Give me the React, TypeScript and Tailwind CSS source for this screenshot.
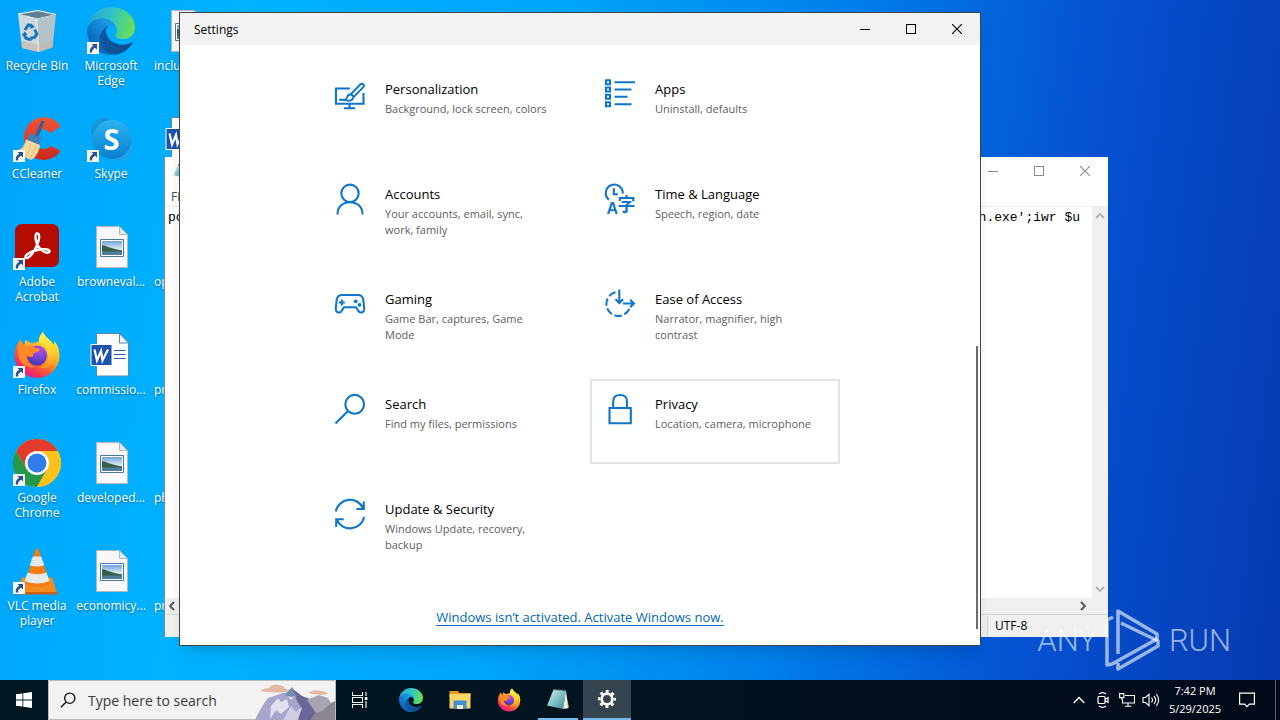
import type { ReactNode } from "react";

type IconProps = { className?: string };

/* ---------- Brand and file drawings ---------- */

function EdgeLogo({ className }: IconProps) {
  return (
    <svg viewBox="0 0 256 256" className={className} aria-hidden="true">
      <defs>
        <linearGradient id="edgeA" x1="63" y1="178" x2="241" y2="178" gradientUnits="userSpaceOnUse">
          <stop offset="0" stopColor="#0c59a4" />
          <stop offset="1" stopColor="#114a8b" />
        </linearGradient>
        <linearGradient id="edgeB" x1="153" y1="100" x2="46" y2="222" gradientUnits="userSpaceOnUse">
          <stop offset="0" stopColor="#1b9de2" />
          <stop offset=".4" stopColor="#1287d8" />
          <stop offset="1" stopColor="#0a62b8" />
        </linearGradient>
        <linearGradient id="edgeC" x1="10" y1="60" x2="245" y2="130" gradientUnits="userSpaceOnUse">
          <stop offset="0" stopColor="#2aa6d4" />
          <stop offset=".45" stopColor="#2fc3c8" />
          <stop offset="1" stopColor="#6be04f" />
        </linearGradient>
      </defs>
      <path fill="url(#edgeA)" d="M235.68 190.46a93.73 93.73 0 01-10.54 4.71 101.87 101.87 0 01-35.9 6.46c-47.32 0-88.54-32.55-88.54-74.32A31.48 31.48 0 01117.13 100c-42.8 1.8-53.8 46.4-53.8 72.53 0 73.88 68.09 81.37 82.76 81.37 7.91 0 19.84-2.3 27-4.56l1.31-.44a128.34 128.34 0 0066.6-52.8 4 4 0 00-5.32-5.64z" />
      <path fill="url(#edgeB)" d="M105.73 241.42a79.2 79.2 0 01-22.74-21.34 80.72 80.72 0 0129.53-120c3.12-1.47 8.45-4.13 15.54-4a32.35 32.35 0 0125.69 13 31.88 31.88 0 016.36 18.66c0-.21 24.46-79.6-80-79.6-43.9 0-80 41.66-80 78.21a130.15 130.15 0 0012.11 56 128 128 0 00156.38 67.11 75.55 75.55 0 01-62.78-8z" />
      <path fill="url(#edgeC)" d="M152.33 148.86c-.81 1.05-3.3 2.5-3.3 5.66 0 2.61 1.7 5.12 4.72 7.23 14.38 10 41.49 8.68 41.56 8.68a59.56 59.56 0 0030.27-8.35 61.38 61.38 0 0030.43-52.88c.26-22.41-8-37.31-11.34-43.91C223.46 23.93 177.72 0 128 0A128 128 0 000 126.2c.48-36.54 36.8-66.05 80-66.05 3.5 0 23.46.34 42 10.07 16.34 8.58 24.9 18.94 30.85 29.21 6.18 10.67 7.28 24.15 7.28 29.52s-2.74 13.33-7.8 19.91z" />
    </svg>
  );
}

function FirefoxLogo({ className }: IconProps) {
  return (
    <svg viewBox="0 0 48 48" className={className} aria-hidden="true">
      <defs>
        <linearGradient id="ffBody" x1="38" y1="6" x2="12" y2="44" gradientUnits="userSpaceOnUse">
          <stop offset="0" stopColor="#ffe93c" />
          <stop offset=".35" stopColor="#ffb526" />
          <stop offset=".6" stopColor="#ff6a30" />
          <stop offset=".85" stopColor="#f5305c" />
          <stop offset="1" stopColor="#e0208a" />
        </linearGradient>
        <radialGradient id="ffGlobe" cx="26" cy="18" r="15" gradientUnits="userSpaceOnUse">
          <stop offset="0" stopColor="#b34bf0" />
          <stop offset=".6" stopColor="#7a45d8" />
          <stop offset="1" stopColor="#4a3ab4" />
        </radialGradient>
        <linearGradient id="ffTail" x1="30" y1="2" x2="40" y2="36" gradientUnits="userSpaceOnUse">
          <stop offset="0" stopColor="#fff44a" />
          <stop offset=".6" stopColor="#ffd029" />
          <stop offset="1" stopColor="#ff8a22" />
        </linearGradient>
      </defs>
      <path fill="url(#ffBody)" d="M30 1c-3 3-4.500 6.500-4.300 9.500-2 .1-4 .7-6 1.700-3-.2-5.400-1.500-6.700-3.700-1 1.500-1.400 3.500-1.200 5.500C9.500 13 8 10.500 7.600 8.500 4 13 1.500 18.500 1.500 25A22.500 22.500 0 0024 47a22.500 22.500 0 0022.500-22.500c0-5.500-2-11-5.500-14.500.5 2 .6 3.700.3 5C39 9 32.500 7.500 30 1z" />
      <path fill="url(#ffTail)" d="M30 1c-3 3-4.500 7-3.800 10.500 5 1.500 8.800 5.500 9.300 11.500.5 7-4 12.500-10.500 13.500 10 3 19.500-4 20.500-13 .5-5-1.500-10.500-4.500-13.500.5 2 .6 3.700.3 5C39 9 32.500 7.500 30 1z" />
      <circle cx="24" cy="24.500" r="10" fill="url(#ffGlobe)" />
      <path fill="#ff8a26" d="M7.600 9.500C9 13 12 14.500 15.500 14.800c2.500-1 5.500.1 7 2.200 1.500.6 3.500.4 4.500 1.200-.6 2-3 3-5 3.600-1.500.5-2.500 2-2 3.700-3 1.500-5.500 0-6.500-2-.5 6 3.500 11.500 9.500 12.500-9 2-16.500-4-17.500-11-.6-5.500.1-11 2.100-15.500z" />
      <path fill="#ffc230" opacity=".6" d="M13 8.500c1.300 2.200 3.700 3.500 6.700 3.700-3 1.500-5 2.600-7.900 1.800-.2-2 .2-4 1.200-5.500z" />
    </svg>
  );
}

function RecycleBin({ className }: IconProps) {
  return (
    <svg viewBox="0 0 48 48" className={className} aria-hidden="true">
      <path d="M5 7 25 3.500 43 7.500 24 12z" fill="#7f99a8" stroke="#eef5f8" strokeWidth="1" />
      <path d="M8 7.300 25 5l14 2.800L25 11z" fill="#5f7f92" />
      <path d="M5 7 24 12l1.500 33L9 41z" fill="#cdd9df" />
      <path d="M43 7.500 24 12l1.500 33L39.500 40.500z" fill="#b3c1c9" />
      <path d="M9 41 25.500 45 39.500 40.500l.9-7L25 37.500 8.300 34z" fill="#c5b9ac" opacity=".7" />
      <path d="M24 12l1.500 33" stroke="#eef4f7" strokeWidth="1" />
      <g fill="none" stroke="#1a72bd" strokeWidth="3">
        <path d="M12 23l3.200-5 3.500.8" />
        <path d="M21.800 22.500l2 4.500-2.800 4.500" />
        <path d="M17.500 32.500l-4.300-1-2.200-4" />
      </g>
      <path d="M17.800 16l4.200 4-5 2zM22.500 29l-4.500 5.500-.8-5zM8.500 28l3.500-3.500 2.500 3.500z" fill="#1a72bd" />
    </svg>
  );
}

function CCleaner({ className }: IconProps) {
  return (
    <svg viewBox="0 0 48 48" className={className} aria-hidden="true">
      <defs>
        <linearGradient id="ccRed" x1="0" y1="0" x2="0" y2="1">
          <stop offset="0" stopColor="#f0553a" />
          <stop offset="1" stopColor="#c8281c" />
        </linearGradient>
      </defs>
      <path fill="url(#ccRed)" d="M47.500 11.500 37.500 18C31 11.500 22 14.500 21.500 23.500c0 10 9.500 13.500 16 7.500l10 4.500C40 48 22 48 14.500 36 5 19 16 .5 33 2.300c6.500.7 11.500 4 14.500 9.200z" />
      <path d="M28.500 5.500l3 1-7.500 19-3.500-1.500z" fill="#35618c" />
      <path d="M17 18.500l12 4-3 9-13-4.500z" fill="#3f80b4" />
      <path d="M13 24.500l14 5.500c-1 7-4 12-9 15L1 37.500c6-2 10-6 12-13z" fill="#f7d9a0" />
      <path d="M13 27l-6 12M18 28.500l-5 14M23 31l-6 13" stroke="#d8ae6c" strokeWidth=".8" fill="none" />
    </svg>
  );
}

function Skype({ className }: IconProps) {
  return (
    <svg viewBox="0 0 48 48" className={className} aria-hidden="true">
      <defs>
        <linearGradient id="skA" x1="0" y1="0" x2="0" y2="1">
          <stop offset="0" stopColor="#2bb3f2" />
          <stop offset="1" stopColor="#0a7fd0" />
        </linearGradient>
      </defs>
      <circle cx="16.500" cy="15.500" r="12.500" fill="#1794da" />
      <circle cx="32" cy="33" r="13" fill="#1fa3ea" />
      <circle cx="25" cy="24.500" r="19.500" fill="url(#skA)" />
      <text x="24.500" y="34.500" textAnchor="middle" fontSize="29" fontWeight="700" fill="#fff" fontFamily="Open Sans, sans-serif">S</text>
    </svg>
  );
}

function Acrobat({ className }: IconProps) {
  return (
    <svg viewBox="0 0 48 48" className={className} aria-hidden="true">
      <rect x="2" y="1" width="44" height="43" rx="7" fill="#b30b00" />
      <path d="M23.800 10.500c2.800-.9 3 4 1.200 9-2 6-6.500 14-10.500 15.500-2.500.8-3-2 0-4 4.500-3 12-5 18-4.800 4 .2 5.500 2.800 2.500 3.400-4.500.8-11.500-6-12.300-13-.4-3.200-.2-5.700 1.100-6.100z" fill="none" stroke="#fff" strokeWidth="2.400" />
    </svg>
  );
}

function Chrome({ className }: IconProps) {
  return (
    <svg viewBox="0 0 48 48" className={className} aria-hidden="true">
      <circle cx="24" cy="24" r="24" fill="#fcc31e" />
      <path fill="#e33b2e" d="M3.200 12A24 24 0 0144.800 12L24 12 24 24 13.600 30z" />
      <path fill="#24994a" d="M3.200 12A24 24 0 0024 48L34.400 30 24 24 13.600 30z" />
      <path fill="#fcc31e" d="M44.800 12A24 24 0 0124 48L34.400 30 24 24 24 12z" />
      <circle cx="24" cy="24" r="12" fill="#fff" />
      <circle cx="24" cy="24" r="9.500" fill="#2f7de9" />
    </svg>
  );
}

function Vlc({ className }: IconProps) {
  return (
    <svg viewBox="0 0 48 48" className={className} aria-hidden="true">
      <path d="M9 30.500h30L44 45.500 3 46z" fill="#f58a1c" />
      <path d="M3 45h41.200l.3 2.500H3z" fill="#cf5f08" />
      <path d="M22.500 2.500q1.500-2.500 3 0L37 36c-2 5.500-23 5.500-25 0z" fill="#f47c10" />
      <path d="M19.800 9.500h8.400l3.100 8.700q-7.300 2.800-14.600 0zM14.600 25.500q9.400 3.500 18.800 0L36.500 34q-12.500 5-25 0z" fill="#e6e8ea" />
    </svg>
  );
}

function PictureFile({ className }: IconProps) {
  return (
    <svg viewBox="0 0 48 48" className={className} aria-hidden="true">
      <defs>
        <linearGradient id="pfSky" x1="0" y1="0" x2="0" y2="1">
          <stop offset="0" stopColor="#6fa3d8" />
          <stop offset=".55" stopColor="#dbe9f2" />
          <stop offset="1" stopColor="#7fa9b8" />
        </linearGradient>
      </defs>
      <path d="M9.500 3.500h23l8 8v33h-31z" fill="#f8f8f8" stroke="#b7b7b7" />
      <path d="M32.500 3.500v8h8z" fill="#d9eaf6" stroke="#b7b7b7" />
      <path d="M13.500 16.500h23v17h-23z" fill="#fff" stroke="#4a78a4" />
      <path d="M15 18h20v14H15z" fill="url(#pfSky)" />
      <path d="M15 22c5 1 9 3.500 20 5.500v1.500H15z" fill="#375e4a" />
      <path d="M15 28.500h20V32H15z" fill="#4f7f96" />
    </svg>
  );
}

function WordFile({ className }: IconProps) {
  return (
    <svg viewBox="0 0 48 48" className={className} aria-hidden="true">
      <path d="M9.500 2.500h23l9 9.500v33h-32z" fill="#fff" stroke="#5e86ab" />
      <path d="M32.500 2.500V12h9z" fill="#eef4fa" stroke="#5e86ab" />
      <path d="M27 19.500h11.500M27 23.500h11.500M27 27.500h11.500" stroke="#2a5ca8" strokeWidth="1.200" />
      <path d="M4 13.500h21v21H4z" fill="#1d53ad" stroke="#fff" strokeWidth="1" />
      <path d="M7.500 18.500l2.500 11 4-9.500 1.500 9.500 5.500-11" fill="none" stroke="#fff" strokeWidth="2.200" />
    </svg>
  );
}

function ShortcutArrow() {
  return (
    <svg viewBox="0 0 12 12" className="absolute bottom-px left-0 size-3" aria-hidden="true">
      <path d="M0 0h12v12H0z" fill="#f4f7fa" />
      <path d="M4.500 2h5.500v5.500L8.300 5.800Q5 7 5 10.500H2.800Q2.300 6 6.300 3.800z" fill="#2b4f8c" />
    </svg>
  );
}

/* ---------- Desktop ---------- */

type DesktopEntry = { icon: (p: IconProps) => ReactNode; label?: string; shortcut?: boolean };

const desktopColumns: DesktopEntry[][] = [
  [
    { icon: RecycleBin, label: "Recycle Bin" },
    { icon: CCleaner, label: "CCleaner", shortcut: true },
    { icon: Acrobat, label: "Adobe Acrobat", shortcut: true },
    { icon: FirefoxLogo, label: "Firefox", shortcut: true },
    { icon: Chrome, label: "Google Chrome", shortcut: true },
    { icon: Vlc, label: "VLC media player", shortcut: true },
  ],
  [
    { icon: EdgeLogo, label: "Microsoft Edge", shortcut: true },
    { icon: Skype, label: "Skype", shortcut: true },
    { icon: PictureFile, label: "browneval..." },
    { icon: WordFile, label: "commissio..." },
    { icon: PictureFile, label: "developed..." },
    { icon: PictureFile, label: "economicy..." },
  ],
  [
    { icon: PictureFile, label: "inclu" },
    { icon: WordFile },
    { icon: PictureFile, label: "op" },
    { icon: PictureFile, label: "pr" },
    { icon: PictureFile, label: "ph" },
    { icon: PictureFile, label: "pr" },
  ],
];

function DesktopIcons() {
  return (
    <div className="flex">
      {desktopColumns.map((column, c) => (
        <ul key={c} className="flex w-[74px] flex-col">
          {column.map(({ icon: Icon, label, shortcut }, i) => (
            <li key={i} className={c === 2 ? "h-[108px] pt-[7px] pl-1.5" : "h-[108px] pt-[7px] text-center"}>
              <div className={c === 2 ? "relative ml-2 size-12" : "relative mx-auto size-12"}>
                <Icon className="size-12" />
                {shortcut && <ShortcutArrow />}
              </div>
              <p className="mt-[3px] text-[12px] leading-[15px] text-white [text-shadow:0_1px_2px_rgba(0,0,0,0.45)]">{label}</p>
            </li>
          ))}
        </ul>
      ))}
    </div>
  );
}

function WindowButtons({ color }: { color: string }) {
  return (
    <div className={"flex self-stretch " + color}>
      <button type="button" aria-label="Minimize" className="flex w-[46px] items-center justify-center">
        <svg viewBox="0 0 10 10" className="size-2.5" shapeRendering="crispEdges"><path d="M0 5.500h10" stroke="currentColor" /></svg>
      </button>
      <button type="button" aria-label="Maximize" className="flex w-[46px] items-center justify-center">
        <svg viewBox="0 0 10 10" className="size-2.5" shapeRendering="crispEdges"><path d="M.5.5h9v9h-9z" fill="none" stroke="currentColor" /></svg>
      </button>
      <button type="button" aria-label="Close" className="flex w-[46px] items-center justify-center">
        <svg viewBox="0 0 10 10" className="size-2.5"><path d="M0 0l10 10M10 0L0 10" stroke="currentColor" strokeWidth="1.100" /></svg>
      </button>
    </div>
  );
}

function Chevron({ d, className }: { d: string; className: string }) {
  return (
    <svg viewBox="0 0 10 10" className={className} aria-hidden="true">
      <path d={d} fill="none" stroke="currentColor" strokeWidth="1.800" />
    </svg>
  );
}

function NotepadGlyph({ className }: IconProps) {
  return (
    <svg viewBox="0 0 24 24" className={className} aria-hidden="true">
      <defs>
        <linearGradient id="npG" x1="0" y1="0" x2="1" y2="1">
          <stop offset="0" stopColor="#d5f1f1" />
          <stop offset=".5" stopColor="#7fc3c8" />
          <stop offset="1" stopColor="#3c8b98" />
        </linearGradient>
      </defs>
      <path d="M19.500 3.500L23 20.500l-3 1.500z" fill="#c9a25e" />
      <path d="M7.500 2.500l12.500 1-3 18.500L1 18.500z" fill="url(#npG)" />
      <path d="M20 3.500l2 17.500-5 1z" fill="#e9f0f0" />
      <path d="M7.500 2.500l12.500 1" stroke="#4d5a60" strokeWidth="1.500" strokeDasharray="1.500 1" />
    </svg>
  );
}

function NotepadWindow() {
  return (
    <section aria-label="Notepad" className="absolute top-[157px] left-[164px] flex h-[480px] w-[944px] flex-col border-l border-[#7d8a92] bg-white text-[12px] text-black">
      <header className="flex h-7 items-center justify-between pl-2">
        <NotepadGlyph className="size-4" />
        <WindowButtons color="text-[#8a8a8a]" />
      </header>
      <nav className="flex h-[22px] items-end border-b border-[#ececec] pl-1.5 text-[#4a4a4a]">
        <button type="button" className="leading-[18px]">File</button>
      </nav>
      <div className="flex min-h-0 flex-1">
        <div className="flex flex-1 justify-between pt-[3px] pr-3 pl-[3px] font-['Liberation_Mono',monospace] text-[13px] leading-4">
          <span>po</span>
          <span>n.exe';iwr $u</span>
        </div>
        <div className="flex w-4 flex-col items-center justify-between bg-[#f0f0f0] py-1 text-[#b0b0b0]">
          <Chevron d="M1 7l4-4 4 4" className="size-2.5" />
          <Chevron d="M1 3l4 4 4-4" className="size-2.5" />
        </div>
      </div>
      <div className="flex h-4 items-center justify-between bg-[#f0f0f0] pr-5 pl-0.5 text-[#505050]">
        <Chevron d="M7 1L3 5l4 4" className="size-2.5" />
        <Chevron d="M3 1l4 4-4 4" className="size-2.5" />
      </div>
      <footer className="flex h-[23px] items-center justify-end border-t border-[#d9d9d9] bg-[#f0f0f0]">
        <span className="flex h-5 w-[121px] items-center border-l border-[#d5d5d5] pl-[7px]">UTF-8</span>
      </footer>
    </section>
  );
}

/* ---------- Settings ---------- */

function TileIcon({ children }: { children: ReactNode }) {
  return (
    <svg viewBox="0 0 30 30" className="size-[30px] shrink-0 overflow-visible" fill="none" stroke="#0f76cc" strokeWidth="2.100" aria-hidden="true">
      {children}
    </svg>
  );
}

const tiles: { title: string; text: string; active?: boolean; icon: ReactNode }[] = [
  {
    title: "Personalization",
    text: "Background, lock screen, colors",
    icon: (
      <>
        <path d="M15 9.500H1v15.200h27.500V14M14.500 25v4M9 29.200h11M4 20.800h7" />
        <path d="M15.500 15.500L25.500 5.300q1.600-1.300 2.900 0 1.200 1.300-.1 2.900L18.300 18.300" strokeWidth="1.900" />
        <path d="M10 21q2-1 2.200-3 .8-2.800 3.500-2.500 2.800.6 2.500 3.200-.8 3-4.200 3-2.500 0-4-.7z" strokeWidth="1.900" />
      </>
    ),
  },
  {
    title: "Apps",
    text: "Uninstall, defaults",
    icon: (
      <>
        <path d="M1 1.300h4v4H1zM1 8.500h4v4H1zM1 15.800h4v4H1zM1 23.300h4v4H1z" />
        <path d="M9.500 3.300H30M9.500 10.500h17M9.500 17.800h13M9.500 25.300h17" />
      </>
    ),
  },
  {
    title: "Accounts",
    text: "Your accounts, email, sync, work, family",
    icon: (
      <>
        <circle cx="15" cy="9.300" r="8.700" />
        <path d="M2.500 30.500C2.500 22.500 8 18.200 15 18.200s12.500 4.300 12.500 12.300" />
      </>
    ),
  },
  {
    title: "Time & Language",
    text: "Speech, region, date",
    icon: (
      <>
        <path d="M3.800 15.600A8.500 8.500 0 1117.800 9.500M8.800 4.200v6h4" />
        <text x="1.500" y="29.500" fontSize="16" fontWeight="700" fill="#0f76cc" stroke="none" fontFamily="Liberation Sans, sans-serif">A</text>
        <text x="12.500" y="27" fontSize="18" fontWeight="700" fill="#0f76cc" stroke="none" fontFamily="Noto Sans CJK SC, sans-serif">字</text>
      </>
    ),
  },
  {
    title: "Gaming",
    text: "Game Bar, captures, Game Mode",
    icon: (
      <>
        <path d="M7 6h16q4.500 0 5.300 5l.9 8q.2 4.500-3.200 4.500-2 0-3.300-2.500l-1-1.800q-.5-.9-1.500-.9H9.800q-1 0-1.500.9l-1 1.800Q6 23.500 4 23.500.6 23.500.8 19l.9-8Q2.500 6 7 6z" />
        <path d="M3.800 13.500h6M6.800 10.500v6" />
        <g fill="#0f76cc" stroke="none">
          <circle cx="20.700" cy="12.300" r="1.900" />
          <circle cx="24.500" cy="15.800" r="1.900" />
        </g>
      </>
    ),
  },
  {
    title: "Ease of Access",
    text: "Narrator, magnifier, high contrast",
    icon: (
      <>
        <path d="M10.500 3.300A12 12 0 1025 17.800" strokeDasharray="7.500 2.700" />
        <path d="M14.300.5v13M10.500 10.200l3.800 3.800 3.800-3.800M18 14.500h10.500M25.200 10.700l3.800 3.800-3.800 3.800" />
      </>
    ),
  },
  {
    title: "Search",
    text: "Find my files, permissions",
    icon: (
      <>
        <circle cx="19.700" cy="10.300" r="9.400" />
        <path d="M13 17L.5 29.500" />
      </>
    ),
  },
  {
    title: "Privacy",
    text: "Location, camera, microphone",
    active: true,
    icon: (
      <>
        <path d="M4.500 14h21.300v15.300H4.500z" />
        <path d="M8.200 14V7.500q0-6.500 6.900-6.500T22 7.500V14" />
      </>
    ),
  },
  {
    title: "Update & Security",
    text: "Windows Update, recovery, backup",
    icon: (
      <>
        <path d="M.8 12.500A14.500 14.500 0 0128.300 9.500M28.800 2.500v7.500h-7.500" />
        <path d="M29.200 18A14.500 14.500 0 011.700 20.500M1.200 28v-7.800h7.500" />
      </>
    ),
  },
];

function SettingsWindow() {
  return (
    <section aria-label="Settings" className="absolute top-3 left-[179px] flex h-[634px] w-[802px] flex-col border border-[#3f464b] bg-white text-black shadow-lg">
      <header className="flex h-8 shrink-0 items-center justify-between bg-[#f2f2f2] pl-3.5 text-[12px]">
        <h1 className="pt-px">Settings</h1>
        <WindowButtons color="text-black" />
      </header>
      <main className="relative flex flex-1 flex-col items-center pt-[19px]">
        <div className="grid grid-cols-[250px_250px] gap-5">
          {tiles.map((t) => (
            <a
              key={t.title}
              href="#"
              className={t.active ? "flex h-[85px] gap-5 border-2 border-[#e3e3e3] p-[13px] pr-0" : "flex h-[85px] gap-5 border-2 border-transparent p-[13px] pr-0"}
            >
              <TileIcon>{t.icon}</TileIcon>
              <span className="flex w-[165px] flex-col gap-0.5">
                <span className="text-[13px] leading-5">{t.title}</span>
                <span className="text-[11px] leading-4 text-[#606060]">{t.text}</span>
              </span>
            </a>
          ))}
        </div>
        <a href="#" className="mt-[38px] text-[13px] leading-5 text-[#0067b8] underline underline-offset-3">
          Windows isn’t activated. Activate Windows now.
        </a>
        <div className="absolute right-0.5 bottom-4 h-[283px] w-0.5 bg-[#6b6b6b]" />
      </main>
    </section>
  );
}

/* ---------- Watermark ---------- */

function Watermark() {
  return (
    <div className="absolute right-[49px] bottom-2 flex items-center gap-1.5 font-['Roboto',sans-serif] text-[31px] leading-none font-light text-white/60">
      <span>ANY</span>
      <svg viewBox="0 0 60 64" className="h-16 w-15" fill="none" stroke="currentColor" strokeWidth="3.500" strokeLinejoin="round" aria-hidden="true">
        <path d="M10 9l-6 3v45l5-1 45-25v-5L15 3v43" />
        <path d="M18 15l37 18v5L15 61v-6" />
      </svg>
      <span>RUN</span>
    </div>
  );
}

/* ---------- Taskbar ---------- */

function Mountains() {
  return (
    <svg viewBox="0 0 80 40" className="h-10 w-20 shrink-0" aria-hidden="true">
      <path d="M5 11q4-3 9-3 2-4 9-3 6 0 7 4 5 0 6 2-14 3-31 0zM53 13q5-4 12-2 6 0 8 3-9 2-20-1z" fill="#e0b9a4" />
      <path d="M0 40Q6 27 13 18l9-3 6-2 7-1 2-3 8 7 9 2 8 10 12 16z" fill="#a7a5cb" />
      <path d="M31 14l6-4 3 6-4 4zM16 26l7-8 3 4 6-3 2 8-8 7-5-4-6 9z" fill="#e1e0ef" />
      <path d="M38 9l9 7 7 3 9 10-3 11H41l6-11-5-8z" fill="#6a6698" />
      <path d="M28 40l8-14 5 6 6-5-4 13z" fill="#cfcde4" />
      <path d="M56 40q5-12 16-15l8-4v19z" fill="#8b8690" />
      <path d="M52 20l12-5 9 3 3 5-9 8-6 2z" fill="#a9a4b3" />
      <path d="M37 7l5 9-6 1-6-2z" fill="#6c8cb0" />
    </svg>
  );
}

function Explorer({ className }: IconProps) {
  return (
    <svg viewBox="0 0 24 24" className={className} aria-hidden="true">
      <path d="M1.500 3h8.500l1.500 2h11v4h-21z" fill="#e29a17" />
      <path d="M1.500 6h21v14.500h-21z" fill="#fcd667" />
      <path d="M5.500 21v-8.500h13V21h-3.500v-4H9v4z" fill="#3e92d1" />
      <path d="M9 17h6v4H9z" fill="#fff0b8" />
    </svg>
  );
}

function Gear({ className }: IconProps) {
  return (
    <svg viewBox="0 0 20 20" className={className} fill="none" stroke="#fff" aria-hidden="true">
      <circle cx="10" cy="10" r="5.300" strokeWidth="2.800" />
      <circle cx="10" cy="10" r="7.700" strokeWidth="2.600" strokeDasharray="3 3.047" strokeDashoffset="1.500" />
    </svg>
  );
}

function TaskViewGlyph({ className }: IconProps) {
  return (
    <svg viewBox="0 0 16 16" className={className} fill="none" stroke="#fff" aria-hidden="true">
      <path d="M.5 0v3.500h10V0M.5 16v-3.500h10V16M.5 5.500h10v5H.5zM14 0v4M14 9v7" strokeWidth="1.100" />
      <path d="M12.800 5h2.600v3h-2.600z" fill="#fff" stroke="none" />
    </svg>
  );
}

function Taskbar() {
  return (
    <footer className="flex h-10 shrink-0 items-stretch bg-linear-to-r from-[#001822] via-[#02131f] to-[#030a1a] text-white">
      <button type="button" aria-label="Start" className="flex w-12 items-center justify-center">
        <svg viewBox="0 0 16 16" className="size-4" fill="#fff"><path d="M0 2.300l6.500-.9v6.200H0zM7.300 1.300L16 0v7.600H7.300zM0 8.400h6.500v6.200L0 13.700zM7.300 8.400H16V16l-8.700-1.200z" /></svg>
      </button>
      <label className="flex w-72 items-center border border-[#b9bcbe] bg-[#f2f2f2] pl-[11px] text-black">
        <svg viewBox="0 0 18 18" className="size-4 shrink-0" fill="none" stroke="#111" strokeWidth="1.500"><circle cx="11" cy="7" r="5.800" /><path d="M7 11.200L1 17.200" /></svg>
        <input type="text" aria-label="Search" placeholder="Type here to search" className="ml-3 min-w-0 flex-1 bg-transparent text-[14px] text-black outline-none placeholder:text-[#3a3a3a]" />
        <Mountains />
      </label>
      <div className="flex">
        <button type="button" aria-label="Task View" className="flex w-12 items-center justify-center"><TaskViewGlyph className="size-4" /></button>
        <button type="button" aria-label="Microsoft Edge" className="ml-[3px] flex w-12 items-center justify-center"><EdgeLogo className="size-6" /></button>
        <button type="button" aria-label="File Explorer" className="flex w-[49px] items-center justify-center"><Explorer className="size-6" /></button>
        <button type="button" aria-label="Firefox" className="flex w-[49px] items-center justify-center"><FirefoxLogo className="size-6" /></button>
        <button type="button" aria-label="Notepad" className="mx-[5px] flex w-10 items-center justify-center border-b-2 border-[#76b9ed]"><NotepadGlyph className="size-6" /></button>
        <button type="button" aria-label="Settings" className="flex w-12 items-center justify-center border-b-2 border-[#76b9ed] bg-[#35444f]"><Gear className="size-5" /></button>
      </div>
      <div className="ml-auto flex items-center">
        <button type="button" aria-label="Show hidden icons" className="flex w-6 justify-center">
          <svg viewBox="0 0 12 12" className="size-3" fill="none" stroke="#fff" strokeWidth="1.300"><path d="M.7 9L6 3.500 11.300 9" /></svg>
        </button>
        <button type="button" aria-label="Meet Now" className="flex w-6 justify-center">
          <svg viewBox="0 0 16 16" className="size-4" fill="none" stroke="#fff" strokeWidth="1.200"><path d="M3 5.500q0-1 1-1h5q1 0 1 1v5q0 1-1 1H4q-1 0-1-1zM10 7.500l3-2v5l-3-2M4 2Q7.500-.8 11 2M4 14q3.500 2.800 7 0" /></svg>
        </button>
        <button type="button" aria-label="Network" className="flex w-6 justify-center">
          <svg viewBox="0 0 16 16" className="size-4" fill="none" stroke="#fff" strokeWidth="1.100"><path d="M6 3.500h9.500v7.500H3.500V7M9 11v3M6 14.300h6.500M.6 1.600h4.300v4H.6zM2.700 5.600v2" /></svg>
        </button>
        <button type="button" aria-label="Volume" className="flex w-6 justify-center">
          <svg viewBox="0 0 18 16" className="h-4 w-[18px]" fill="none" stroke="#fff" strokeWidth="1.100"><path d="M1 5.500h2.500L7 2.300v11.400L3.500 10.500H1zM9.500 5.500q2 2.500 0 5M12 3.800q3.300 4.200 0 8.400M14.300 2q4.600 6 0 12" /></svg>
        </button>
        <button type="button" className="w-16 text-center text-[11px] leading-[18px]">
          <span className="block">7:42 PM</span>
          <span className="block">5/29/2025</span>
        </button>
        <button type="button" aria-label="Notifications" className="flex w-10 justify-center">
          <svg viewBox="0 0 16 16" className="size-4" fill="none" stroke="#fff" strokeWidth="1.200"><path d="M.6 1.100h14.800v11h-5L8 14.600l-2.400-2.500h-5z" /></svg>
        </button>
        <div className="ml-2 h-10 w-[5px] border-l border-[#5a6570]" />
      </div>
    </footer>
  );
}

export default function App() {
  return (
    <div className="flex min-h-screen flex-col overflow-hidden font-['Open_Sans','Noto_Sans',sans-serif]">
      <div className="relative min-h-[680px] flex-1 bg-[linear-gradient(97deg,#00a4fb_0%,#00b2ff_18%,#00a4fa_42%,#0080ea_62%,#0553d4_80%,#063ab0_100%)]">
        <DesktopIcons />
        <NotepadWindow />
        <SettingsWindow />
        <Watermark />
      </div>
      <Taskbar />
    </div>
  );
}
